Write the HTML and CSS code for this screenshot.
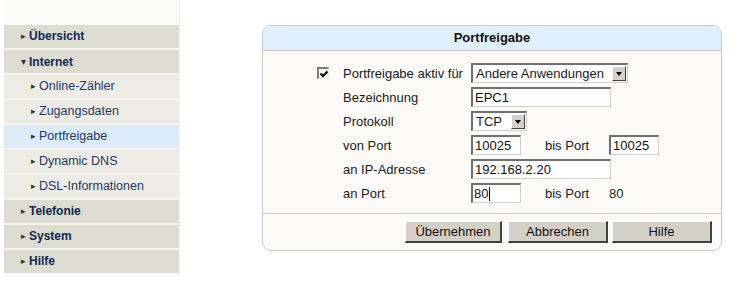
FILE: index.html
```
<!DOCTYPE html>
<html lang="de">
<head>
    <meta charset="UTF-8">
    <title>Portfreigabe</title>
    <link rel="stylesheet" href="styles.css">
</head>
<body>
    <div class="page">
        <div class="sidebar">
            <ul class="menu">
                <li class="item top"><span class="arr">&#9656;</span>Übersicht</li>
                <li class="item top"><span class="arr down">&#9662;</span>Internet</li>
                <li class="item sub"><span class="arr">&#9656;</span>Online-Zähler</li>
                <li class="item sub"><span class="arr">&#9656;</span>Zugangsdaten</li>
                <li class="item sub active"><span class="arr">&#9656;</span>Portfreigabe</li>
                <li class="item sub"><span class="arr">&#9656;</span>Dynamic DNS</li>
                <li class="item sub"><span class="arr">&#9656;</span>DSL-Informationen</li>
                <li class="item top"><span class="arr">&#9656;</span>Telefonie</li>
                <li class="item top"><span class="arr">&#9656;</span>System</li>
                <li class="item top"><span class="arr">&#9656;</span>Hilfe</li>
            </ul>
        </div>

        <div class="panel">
            <div class="panel-head">Portfreigabe</div>
            <div class="panel-body">
                <div class="row">
                    <span class="check-cell"><span class="checkbox">
                        <svg width="8" height="8" viewBox="0 0 8 8"><path d="M0.5 3.5 L3 6 L7.5 1.5" fill="none" stroke="#000" stroke-width="2"/></svg>
                    </span></span>
                    <span class="label">Portfreigabe aktiv für</span>
                    <span class="select wide"><span class="sel-text">Andere Anwendungen</span><span class="sel-btn"><i class="tri"></i></span></span>
                </div>
                <div class="row">
                    <span class="check-cell"></span>
                    <span class="label">Bezeichnung</span>
                    <input class="field long" type="text" value="EPC1">
                </div>
                <div class="row">
                    <span class="check-cell"></span>
                    <span class="label">Protokoll</span>
                    <span class="select short"><span class="sel-text">TCP</span><span class="sel-btn"><i class="tri"></i></span></span>
                </div>
                <div class="row">
                    <span class="check-cell"></span>
                    <span class="label">von Port</span>
                    <input class="field port" type="text" value="10025">
                    <span class="label2">bis Port</span>
                    <input class="field port" type="text" value="10025">
                </div>
                <div class="row">
                    <span class="check-cell"></span>
                    <span class="label">an IP-Adresse</span>
                    <input class="field long" type="text" value="192.168.2.20">
                </div>
                <div class="row">
                    <span class="check-cell"></span>
                    <span class="label">an Port</span>
                    <span class="field port fake">80<i class="caret"></i></span>
                    <span class="label2">bis Port</span>
                    <span class="plain">80</span>
                </div>
            </div>
            <div class="panel-foot">
                <button class="btn b1">Übernehmen</button>
                <button class="btn b2">Abbrechen</button>
                <button class="btn b3">Hilfe</button>
            </div>
        </div>
    </div>
</body>
</html>
```

FILE: styles.css
```
body {
    margin: 0;
    background: #fff;
    font-family: "Liberation Sans", Arial, sans-serif;
    color: #1c1c1c;
}

.page {
    display: flex;
    align-items: flex-start;
}

/* Navigation */
.sidebar {
    margin-left: 4px;
    width: 175px;
    padding-top: 25px;
    padding-bottom: 4px;
    background: #fbfbfa;
    border-right: 1px solid #f1f1ef;
}

.menu {
    list-style: none;
    margin: 0;
    padding: 0;
    display: flex;
    flex-direction: column;
    gap: 2px;
    background: #f7f5ee;
}

.item {
    height: 23px;
    line-height: 23px;
    white-space: nowrap;
}

.item.top {
    background: #dddcd1;
    color: #0d2a55;
    font-weight: bold;
    font-size: 12px;
    padding-left: 17px;
}

.item.sub {
    background: #ecebe4;
    color: #1d3a66;
    font-size: 12.5px;
    padding-left: 27px;
}

.item.active {
    background: #dbebf8;
}

.arr {
    display: inline-block;
    width: 8px;
    font-size: 9px;
    color: #333;
    font-weight: normal;
    vertical-align: 1px;
}

.arr.down {
    font-size: 10px;
}

/* Panel */
.panel {
    margin-left: 82px;
    margin-top: 25px;
    width: 458px;
    border: 1px solid #c9c9c6;
    border-radius: 9px;
    background: #fbfaf6;
    overflow: hidden;
}

.panel-head {
    height: 24px;
    line-height: 24px;
    background: #dff0fc;
    border-bottom: 1px solid #c9c9c6;
    text-align: center;
    font-weight: bold;
    font-size: 13px;
    color: #111;
}

.panel-body {
    padding: 10px 0 8px 54px;
}

.row {
    display: flex;
    align-items: center;
    height: 24px;
    font-size: 13px;
}

.check-cell {
    width: 26px;
    display: flex;
    align-items: center;
}

.checkbox {
    width: 9px;
    height: 9px;
    border-top: 2px solid #7b7b7b;
    border-left: 2px solid #7b7b7b;
    border-right: 1px solid #e8e6e0;
    border-bottom: 1px solid #e8e6e0;
    background: #f6f5f1;
    display: flex;
    align-items: center;
    justify-content: center;
}

.label {
    width: 128px;
}

.label2 {
    margin-left: 24px;
    width: 64px;
}

.field {
    box-sizing: border-box;
    height: 20px;
    padding: 0 2px;
    font: 13px "Liberation Sans", Arial, sans-serif;
    color: #111;
    background: #fff;
    border-top: 2px solid #6f6f6f;
    border-left: 2px solid #6f6f6f;
    border-right: 1px solid #d4d0c8;
    border-bottom: 1px solid #d4d0c8;
    outline: none;
}

.field.long {
    width: 140px;
}

.field.port {
    width: 50px;
}

.field.fake {
    display: flex;
    align-items: center;
    padding-left: 1px;
}

.caret {
    display: inline-block;
    width: 1px;
    height: 14px;
    background: #000;
    margin-left: 1px;
}

.select {
    box-sizing: border-box;
    height: 20px;
    display: flex;
    align-items: center;
    justify-content: space-between;
    background: #fff;
    border-top: 2px solid #6f6f6f;
    border-left: 2px solid #6f6f6f;
    border-right: 1px solid #d4d0c8;
    border-bottom: 1px solid #d4d0c8;
    padding-left: 3px;
}

.select.wide {
    width: 157px;
}

.select.short {
    width: 56px;
}

.sel-btn {
    box-sizing: border-box;
    width: 14px;
    height: 15px;
    margin-right: 1px;
    background: #d4d0c8;
    border-top: 1px solid #fff;
    border-left: 1px solid #fff;
    border-right: 1px solid #404040;
    border-bottom: 1px solid #404040;
    display: flex;
    align-items: center;
    justify-content: center;
}

.tri {
    width: 0;
    height: 0;
    border-left: 3.5px solid transparent;
    border-right: 3.5px solid transparent;
    border-top: 4px solid #000;
}

/* Buttons */
.panel-foot {
    border-top: 1px solid #c9c9c6;
    display: flex;
    justify-content: flex-end;
    gap: 6px;
    padding: 7px 9px 7px 0;
}

.btn {
    box-sizing: border-box;
    height: 22px;
    font: 13px "Liberation Sans", Arial, sans-serif;
    color: #111;
    background: #d4d0c8;
    border-top: 1px solid #fff;
    border-left: 1px solid #fff;
    border-right: 2px solid #404040;
    border-bottom: 2px solid #404040;
    padding: 0;
}

.btn.b1 { width: 97px; }
.btn.b2 { width: 100px; margin-right: -2px; }
.btn.b3 { width: 100px; }
```
